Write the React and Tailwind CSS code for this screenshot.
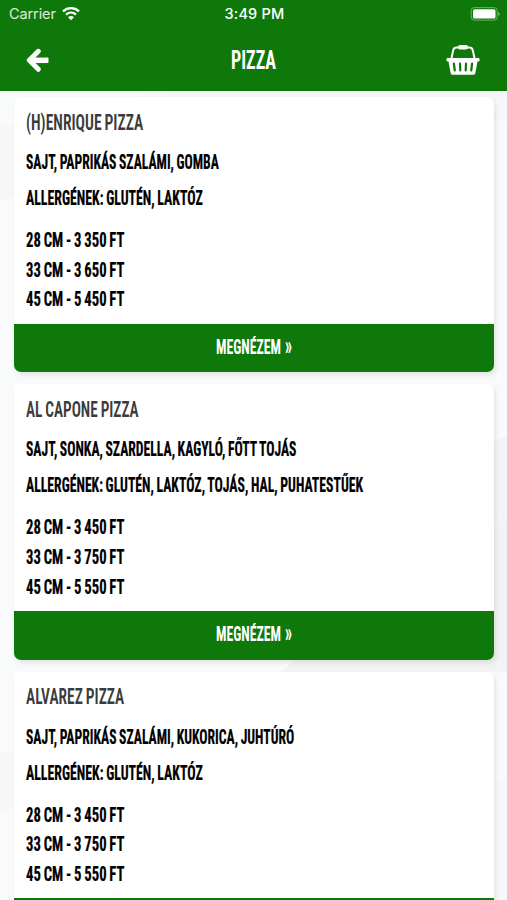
import { useLayoutEffect, useRef, useState } from "react";

const pizzas = [
  {
    name: ["(H)ENRIQUE PIZZA", 117],
    toppings: ["SAJT, PAPRIKÁS SZALÁMI, GOMBA", 193],
    allergens: ["ALLERGÉNEK: GLUTÉN, LAKTÓZ", 177],
    prices: ["28 CM - 3 350 FT", "33 CM - 3 650 FT", "45 CM - 5 450 FT"],
  },
  {
    name: ["AL CAPONE PIZZA", 112.5],
    toppings: ["SAJT, SONKA, SZARDELLA, KAGYLÓ, FŐTT TOJÁS", 270.5],
    allergens: ["ALLERGÉNEK: GLUTÉN, LAKTÓZ, TOJÁS, HAL, PUHATESTŰEK", 337],
    prices: ["28 CM - 3 450 FT", "33 CM - 3 750 FT", "45 CM - 5 550 FT"],
  },
  {
    name: ["ALVAREZ PIZZA", 98.5],
    toppings: ["SAJT, PAPRIKÁS SZALÁMI, KUKORICA, JUHTÚRÓ", 268],
    allergens: ["ALLERGÉNEK: GLUTÉN, LAKTÓZ", 177],
    prices: ["28 CM - 3 450 FT", "33 CM - 3 750 FT", "45 CM - 5 550 FT"],
  },
];

// Narrow poster lettering: squeezes one line of text to the given width
function Narrow({ width, className, children }) {
  const ref = useRef(null);
  const [scale, setScale] = useState(1);

  useLayoutEffect(() => {
    setScale(width / ref.current.offsetWidth);
  }, [width, children]);

  return (
    <span className="block" style={{ width }}>
      <span
        ref={ref}
        className={`inline-block origin-left whitespace-nowrap align-top font-[Roboto,sans-serif] [font-stretch:75%] [word-spacing:-0.04em] ${className}`}
        style={{ transform: `scaleX(${scale})` }}
      >
        {children}
      </span>
    </span>
  );
}

function StatusBar() {
  return (
    <div className="grid h-7 grid-cols-3 items-center pl-[9px] pr-[7px] text-[14.5px] text-white">
      <div className="flex items-center gap-[6px]">
        <span className="tracking-[-0.1px] text-white/85">Carrier</span>
        <svg width="18" height="14" viewBox="0 0 18 14" fill="none">
          <path d="M1 4.3C5.6.1 12.4.1 17 4.3" stroke="#fff" strokeWidth="2.300" />
          <path d="M4 7.600c2.900-2.600 7.100-2.600 10 0" stroke="#fff" strokeWidth="2.200" />
          <path d="M6 10.200c1.700-1.500 4.300-1.500 6 0l-3 3z" fill="#fff" />
        </svg>
      </div>
      <span className="text-center font-medium tracking-[0.2px]">3:49 PM</span>
      <svg className="ml-auto" width="31" height="14" viewBox="0 0 31 14">
        <rect x="2.200" y=".6" width="26" height="12.500" rx="3" fill="none" stroke="#fff" strokeOpacity=".4" />
        <rect x="4" y="2.200" width="22.500" height="9.300" rx="1.5" fill="#fff" />
        <path d="M29.300 5c1.100.5 1.500 1.100 1.500 2s-.4 1.5-1.500 2z" fill="#fff" fillOpacity=".45" />
      </svg>
    </div>
  );
}

function TitleBar() {
  return (
    <div className="flex h-[63px] items-center justify-between pl-[26px] pr-[27px]">
      <button type="button" aria-label="Vissza" className="w-[34px]">
        <svg width="24" height="26" viewBox="0 0 24 26" fill="none" stroke="#fff">
          <path d="M12.300 4.300 3.300 13.300l9 9" strokeWidth="4.900" strokeLinecap="round" strokeLinejoin="round" />
          <path d="M4 13.300h17.500" strokeWidth="5.500" />
          <path d="M21.500 11.600v3.400" strokeWidth="2" strokeLinecap="round" />
        </svg>
      </button>
      <Narrow width={45} className="text-[26px] leading-[30px] font-bold text-white">
        PIZZA
      </Narrow>
      <button type="button" aria-label="Kosár">
        <svg width="34" height="32" viewBox="0 0 34 32" fill="none">
          <path d="M5.500 14 7.300 6Q8 3.500 10.500 3.500h13q2.500 0 3.200 2.500L28.500 14" stroke="#fff" strokeWidth="2" />
          <rect x="12" y="1" width="10" height="4.500" rx="2" fill="#fff" />
          <path
            d="M1.500 14h31q1 0 1 1v1.500q0 1-1 1h-1L29.300 29.200Q29 30.700 27.500 30.700H6.500Q5 30.700 4.700 29.200L2.500 17.500h-1q-1 0-1-1V15q0-1 1-1z"
            fill="#fff"
          />
          <path d="m7.900 19.500.9 7M14 19.500l.3 7M20 19.500l-.3 7M26.100 19.500l-.9 7" stroke="#0f780b" strokeWidth="2.200" strokeLinecap="round" />
        </svg>
      </button>
    </div>
  );
}

function PizzaCard({ pizza }) {
  return (
    <article className="h-[275.300px] shrink-0 overflow-hidden rounded-[7px] bg-white shadow-[2px_3px_5px_rgba(0,0,0,0.09)]">
      <div className="h-[226.600px] pl-[12.500px] pt-[10.700px]">
        <h2>
          <Narrow width={pizza.name[1]} className="text-[22px] leading-[30px] font-semibold text-[#3b3b3b]">
            {pizza.name[0]}
          </Narrow>
        </h2>
        <div className="mt-[7.300px] text-black">
          <Narrow width={pizza.toppings[1]} className="text-[19.7px] leading-9 font-bold [-webkit-text-stroke:0.2px]">
            {pizza.toppings[0]}
          </Narrow>
          <Narrow width={pizza.allergens[1]} className="text-[19.7px] leading-9 font-bold [-webkit-text-stroke:0.2px]">
            {pizza.allergens[0]}
          </Narrow>
        </div>
        <div className="mt-[9px] text-black">
          {pizza.prices.map((price) => (
            <Narrow key={price} width={98.5} className="text-[19.7px] leading-[29.7px] font-bold [-webkit-text-stroke:0.2px]">
              {price}
            </Narrow>
          ))}
        </div>
      </div>
      <button
        type="button"
        className="flex h-[48.700px] w-full items-center justify-center gap-[4px] bg-[#0f780b] text-white"
      >
        <Narrow width={65} className="text-[19.500px] leading-[30px] font-bold">
          MEGNÉZEM
        </Narrow>
        <Narrow width={7} className="-mt-[4px] text-[27px] leading-[30px] font-bold">
          »
        </Narrow>
      </button>
    </article>
  );
}

// Pale folded-paper shapes behind the cards
function Backdrop() {
  return (
    <svg className="absolute inset-0" width="507" height="809" viewBox="0 0 507 809">
      <path d="M0 0h507v809H0z" fill="#f9fafb" />
      <path d="M130 6 170 0h337v30z" fill="#f6f7f8" />
      <path d="M0 34h14v70L0 112z" fill="#f6f7f9" />
      <path d="m507 345-14 6v79l14-5z" fill="#f3f4f6" />
      <path d="m507 425-14 7L280 581h227z" fill="#f2f3f5" />
      <path d="M0 662h14v55L0 722z" fill="#f6f7f9" />
      <path d="M494 690h13v119h-13z" fill="#f7f8f9" />
    </svg>
  );
}

export default function App() {
  return (
    <div className="flex h-[900px] w-[507px] flex-col overflow-hidden font-[Inter,sans-serif]">
      <header className="h-[91px] shrink-0 bg-[#0f780b]">
        <StatusBar />
        <TitleBar />
      </header>
      <main className="relative min-h-0 flex-1">
        <Backdrop />
        <div className="relative flex h-full flex-col gap-3 overflow-y-auto pl-[13.5px] pr-[13px] pt-[6px] [scrollbar-width:none]">
          {pizzas.map((pizza) => (
            <PizzaCard key={pizza.name[0]} pizza={pizza} />
          ))}
        </div>
      </main>
    </div>
  );
}
